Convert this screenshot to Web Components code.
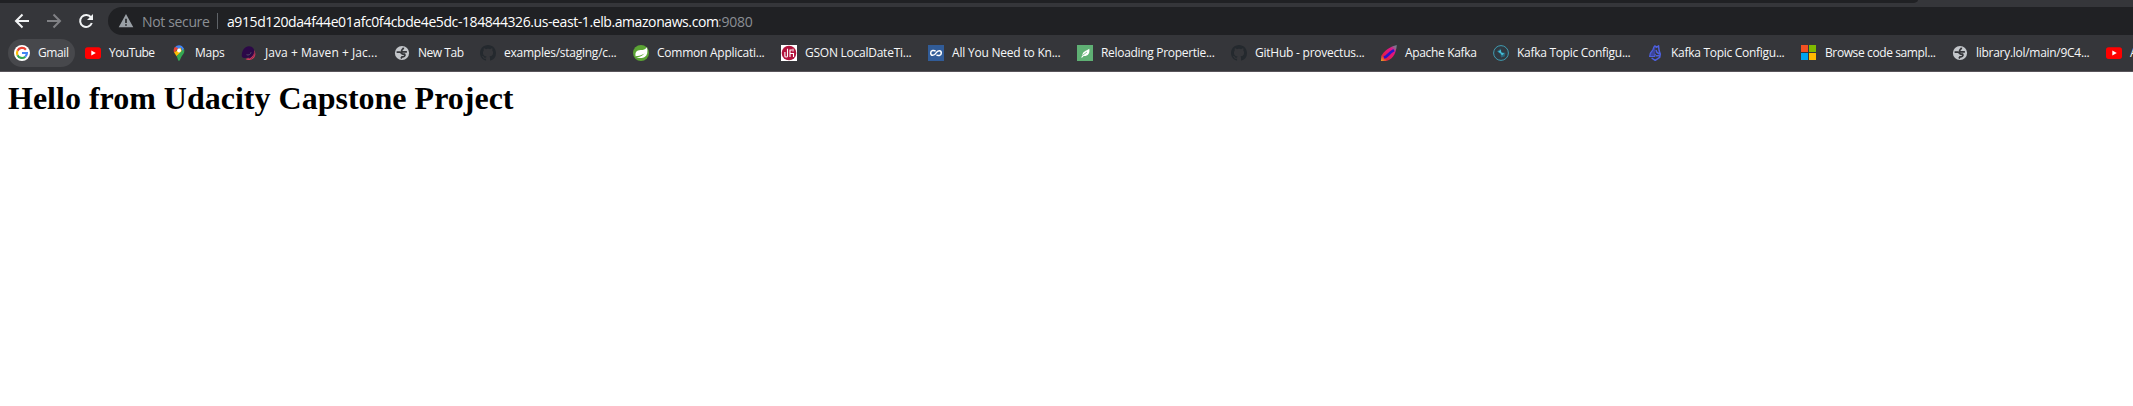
<!DOCTYPE html>
<html lang="en"><head><meta charset="utf-8"><title>Capstone</title>
<style>html,body{margin:0;height:100%;overflow:hidden;background:#fff}</style></head>
<body><browser-window></browser-window>
<script>
const octo='<path fill="#24292e" fill-rule="evenodd" d="M8 0C3.58 0 0 3.58 0 8c0 3.54 2.29 6.53 5.47 7.59.4.07.55-.17.55-.38v-1.49c-2.01.37-2.53-.49-2.69-.94-.09-.23-.48-.94-.82-1.13-.28-.15-.68-.52-.01-.53.63-.01 1.08.58 1.23.82.72 1.21 1.87.87 2.33.66.07-.52.28-.87.51-1.07-1.78-.2-3.64-.89-3.64-3.95 0-.87.31-1.59.82-2.15-.08-.2-.36-1.02.08-2.12 0 0 .67-.21 2.2.82.64-.18 1.32-.27 2-.27s1.36.09 2 .27c1.53-1.04 2.2-.82 2.2-.82.44 1.1.16 1.92.08 2.12.51.56.82 1.27.82 2.15 0 3.07-1.87 3.75-3.65 3.95.29.25.54.73.54 1.48v2.2c0 .21.15.46.55.38A8 8 0 0 0 16 8c0-4.42-3.58-8-8-8z"/>';
const tube='<rect y="2.3" width="16" height="11.6" rx="2.6" fill="#f00"/><path d="M6.3 5.5v5L10.8 8z" fill="#fff"/>';
const globe='<circle cx="8" cy="8" r="7.1" fill="#c3c6ca"/><path d="M2.6 7.2h3.2c1.6 0 1.7 1.9 3.2 1.9h1.6c1.2 1.6-.6 2.6-2.6 2.8l-1 1.6M12.9 6.9H9.4c-1.8 0-2.2-1-1.5-2 .5-.8 1.5-.7 1.6-2.3" fill="none" stroke="#35363a" stroke-width="1.7"/>';
const ring='<circle cx="8" cy="8" r="7.4" fill="#303941" stroke="#409bb0" stroke-width="1"/><path d="M3.8 6.2 8 3.6l.3 3.6 4.2.6-.8 3.6L8 12.6 7.4 9z" fill="#2b6477"/><path d="m5 6.8 2.8-2 .5 2.8 3 1-2.3 2-1.5-2.3z" fill="#45bed8"/>';
const ICONS={
google:'<circle cx="8" cy="8" r="8" fill="#fff"/><g fill="none" stroke-width="2.2"><path d="M11.9 4.7A5 5 0 0 0 3.5 5.8" stroke="#ea4335"/><path d="M3.5 5.8a5 5 0 0 0 0 4.4" stroke="#fbbc05"/><path d="M3.5 10.2a5 5 0 0 0 7.8 1.5" stroke="#34a853"/><path d="M11.3 11.7A5 5 0 0 0 12.9 8H8" stroke="#4285f4"/></g>',
tube,globe,octo,ring,
maps:'<path d="M8 .2a5.3 5.3 0 0 0-4.1 2L8 5.6l3.2-4.3A5.3 5.3 0 0 0 8 .2z" fill="#4285f4"/><path d="M3.9 2.1a5.4 5.4 0 0 0-.7 5.7l4.2-4.7z" fill="#ea4335"/><path d="m3.1 7.5 6.6-5.1 1.6 4-5.7 4.8z" fill="#fbbc04"/><path d="M5.6 11.2 13 3.5c1 3.5-.2 5.3-2.1 7.4C9.6 12.5 9.2 15.8 8 15.8S6.8 13 5.6 11.2z" fill="#34a853"/><path d="M9.6 1 11 1.3 13 3.5 11 6z" fill="#4285f4"/><circle cx="8" cy="5.5" r="1.9" fill="#fff"/>',
java:'<path d="M12.5 4.4c3.2 3.4 2.2 9-2.5 10.3-2 .5-4.2.3-5.5-.8 4.500-.5 8.300-4 8-9.500z" fill="#d23d5c"/><path d="M8 1.200c4.600.2 6.500 4.600 4.500 8.300-1.200 2.400-3 3.600-5 4.200l.8-1.800c-3 1-5.600 2.300-7.500-.5C.600 6.500 3 1.200 8 1.200z" fill="#2c0848"/><path d="M5.500 9.700c2 1 4.200-.3 4.600-2.500" stroke="#54546a" stroke-width=".9" fill="none"/><path d="M13.300 7c.4 3.200-1.200 5.700-3.900 7.300" stroke="#74204b" stroke-width=".7" fill="none"/>',
spring:'<circle cx="8" cy="8" r="8" fill="#5ba334"/><path d="M14 2.2c1 4.8.4 8.1-2.3 9.900-2.400 1.500-5 .8-8.500.900C5.600 12 8.600 11.800 12 8 8.600 10.800 5.700 10.500 2.700 11.400 1.700 7.400 3.600 5.400 7.600 5.100c2.700-.1 5-.8 6.400-2.900z" fill="#fff"/>',
gson:'<path fill="#fff" d="M0 0h16v16H0z"/><circle cx="8" cy="8" r="7.300" fill="#b1123b"/><path d="M6.500 3.800v7.500c0 1-2.600 1-2.600 0V7M9 12V5h2M9 8.500h3.500V12M12 3.800v2.600" fill="none" stroke="#fff" stroke-width="1.1"/>',
infinity:'<path fill="#315c98" d="M0 0h16v16H0z"/><path d="M7.600 6.300C6.300 5 2.700 5 2.700 8s3.400 3.300 5.300 0 5.300-3 5.300 0-3.500 3.100-4.800 1.700" fill="none" stroke="#fff" stroke-width="1.500"/>',
leaf:'<path fill="#5fb074" d="M0 0h16v16H0z"/><path d="M12.300 3.800c.7 4.600-1 7.400-5.600 7.300l-1.700 1.600-.9-.4 1.200-1.600C5.500 6.200 9.100 6.200 12.300 3.800z" fill="#fff"/><path d="M5.600 10.300 10 7" stroke="#5fb074" stroke-width=".7"/>',
feather:'<defs><linearGradient id="f" x1="0" y1="1" x2="1" y2="0"><stop stop-color="#e8b020"/><stop offset=".22" stop-color="#e31e42"/><stop offset=".7" stop-color="#e4148b"/><stop offset=".9" stop-color="#777b8b"/></linearGradient></defs><path d="M15.800 0C9.500 1.500 3 5.700.4 10.800L0 16h4.800c5.500-.8 10.300-6 11-16z" fill="url(#f)"/><path d="M3 12.600c3.600-.9 4.200-4.300 10-7.400" fill="none" stroke="#2a14c8" stroke-width="2.600"/>',
knight:'<path d="M8.300.500 6.800 2 6 4.500 3.300 8.300l-.6 3.200h5L8.300 9" fill="#3c459c" stroke="#4e60df" stroke-width="1.200"/><path d="m8.300.8 1 1.500L11.500 1l.6 4.500 1.200 3.600-.6 3.300-4.500 3-3.600-2.400M9 5l1 2.500 2.500 1.500M9 10.800h3.300" fill="none" stroke="#4e60df" stroke-width="1.500"/>',
ms:'<path fill="#f25022" d="M0 0h7v7H0z"/><path fill="#7fba00" d="M8 0h7v7H8z"/><path fill="#00a4ef" d="M0 8h7v7H0z"/><path fill="#ffb900" d="M8 8h7v7H8z"/>'};
const define=(name,html,after)=>customElements.define(name,class extends HTMLElement{
 connectedCallback(){const r=this.attachShadow({mode:'open'});r.innerHTML=typeof html==='function'?html(this):html;if(after)after(this,r);}
});
const fit=(el,target)=>{const w=el.getBoundingClientRect().width;el.style.letterSpacing=((target-w)/[...el.textContent].length)+'px';};
define('site-icon',e=>`<style>:host{display:block;flex:none;width:16px;height:16px}svg{display:block}</style><svg width="16" height="16" viewBox="0 0 16 16">${ICONS[e.getAttribute('name')]}</svg>`);
define('fit-text',e=>`<style>:host{display:block;flex:none;width:${e.getAttribute('w')}px;white-space:nowrap}span{display:inline-block;white-space:pre}</style><span>${e.textContent}</span>`,(e,r)=>fit(r.querySelector('span'),+e.getAttribute('w')+.5));
define('bookmark-item',e=>`<style>:host{display:flex;flex:none;align-items:center;box-sizing:border-box;height:28px;padding:0 7px 0 6px;margin-right:4px;gap:8px;border-radius:14px}:host([active]){background:#47484c}fit-text{margin-bottom:2px}</style><site-icon name="${e.getAttribute('icon')}"></site-icon><fit-text w="${e.getAttribute('w')}">${e.textContent}</fit-text>`);
define('bookmarks-bar',`<style>:host{display:flex;height:37px;box-sizing:border-box;padding:4px 0 0 8px;overflow:hidden;background:#35363a;color:#f6f7f8;border-bottom:1px solid #59555b;font:12px "Open Sans","Noto Sans",sans-serif}</style>
${[['google','Gmail',30],['tube','YouTube',45],['maps','Maps',29],['java','Java + Maven + Jac...',112],['globe','New Tab',45],['octo','examples/staging/c...',112],['spring','Common Applicati...',107],['gson','GSON LocalDateTi...',106],['infinity','All You Need to Kn...',108],['leaf','Reloading Propertie...',113],['octo','GitHub - provectus...',109],['feather','Apache Kafka',71],['ring','Kafka Topic Configu...',113],['knight','Kafka Topic Configu...',113],['ms','Browse code sampl...',110],['globe','library.lol/main/9C4...',113],['tube','A',8]].map(([i,t,w],n)=>`<bookmark-item icon="${i}" w="${w}"${n?'':' active'}>${t}</bookmark-item>`).join('')}`);
define('address-bar',`<style>:host{display:flex;align-items:center;flex:1;height:28px;border-radius:14px 0 0 14px;background:#202124;color:#fff;font:14px "Open Sans","Noto Sans",sans-serif;padding-left:10px}svg{flex:none;margin-right:8px}.g{color:#8b8f94}i{width:1px;height:16px;background:#5f6368;margin:0 9px 0 8px}</style>
<svg width="16" height="16" viewBox="0 0 16 16"><path fill="#9aa0a6" fill-rule="evenodd" d="M8 1 15.3 14.3H.7zM7.2 5.8v4.3h1.6V5.8zm0 5.4v1.6h1.6v-1.6z"/></svg><fit-text class="g" w="67">Not secure</fit-text><i></i><fit-text w="491">a915d120da4f44e01afc0f4cbde4e5dc-184844326.us-east-1.elb.amazonaws.com</fit-text><fit-text class="g" w="34">:9080</fit-text>`);
define('nav-toolbar',`<style>:host{display:flex;height:28px;background:#35363a;padding-top:4px}nav{display:flex;align-items:center;width:94px;padding-left:14px;gap:16px}svg{flex:none;display:block}</style>
<nav><svg width="16" height="16" fill="none" stroke="#f1f3f4" stroke-width="2"><path d="M15 8H2M8.5 1.5 2 8l6.5 6.5"/></svg><svg width="16" height="16" fill="none" stroke="#808185" stroke-width="2"><path d="M1 8h13M7.5 1.5 14 8l-6.5 6.5"/></svg><svg width="16" height="16"><path d="M13 4.4A6 6 0 1 0 13.8 10" fill="none" stroke="#f1f3f4" stroke-width="2"/><path d="M15 1v6H9z" fill="#f1f3f4"/></svg></nav><address-bar></address-bar>`);
define('tab-edge',`<style>:host{display:block;height:3px;background:#35363a}div{width:1918px;height:3px;background:#202124;border-bottom-right-radius:5px 3px}</style><div></div>`);
define('page-content',`<style>:host{display:block;padding:8px}h1{margin:0;font:bold 32px/37px "Liberation Serif",serif;color:#000}</style><h1><fit-text w="505">Hello from Udacity Capstone Project</fit-text></h1>`);
define('browser-window',`<style>:host{display:block}</style><tab-edge></tab-edge><nav-toolbar></nav-toolbar><bookmarks-bar></bookmarks-bar><page-content></page-content>`);
</script></body></html>
